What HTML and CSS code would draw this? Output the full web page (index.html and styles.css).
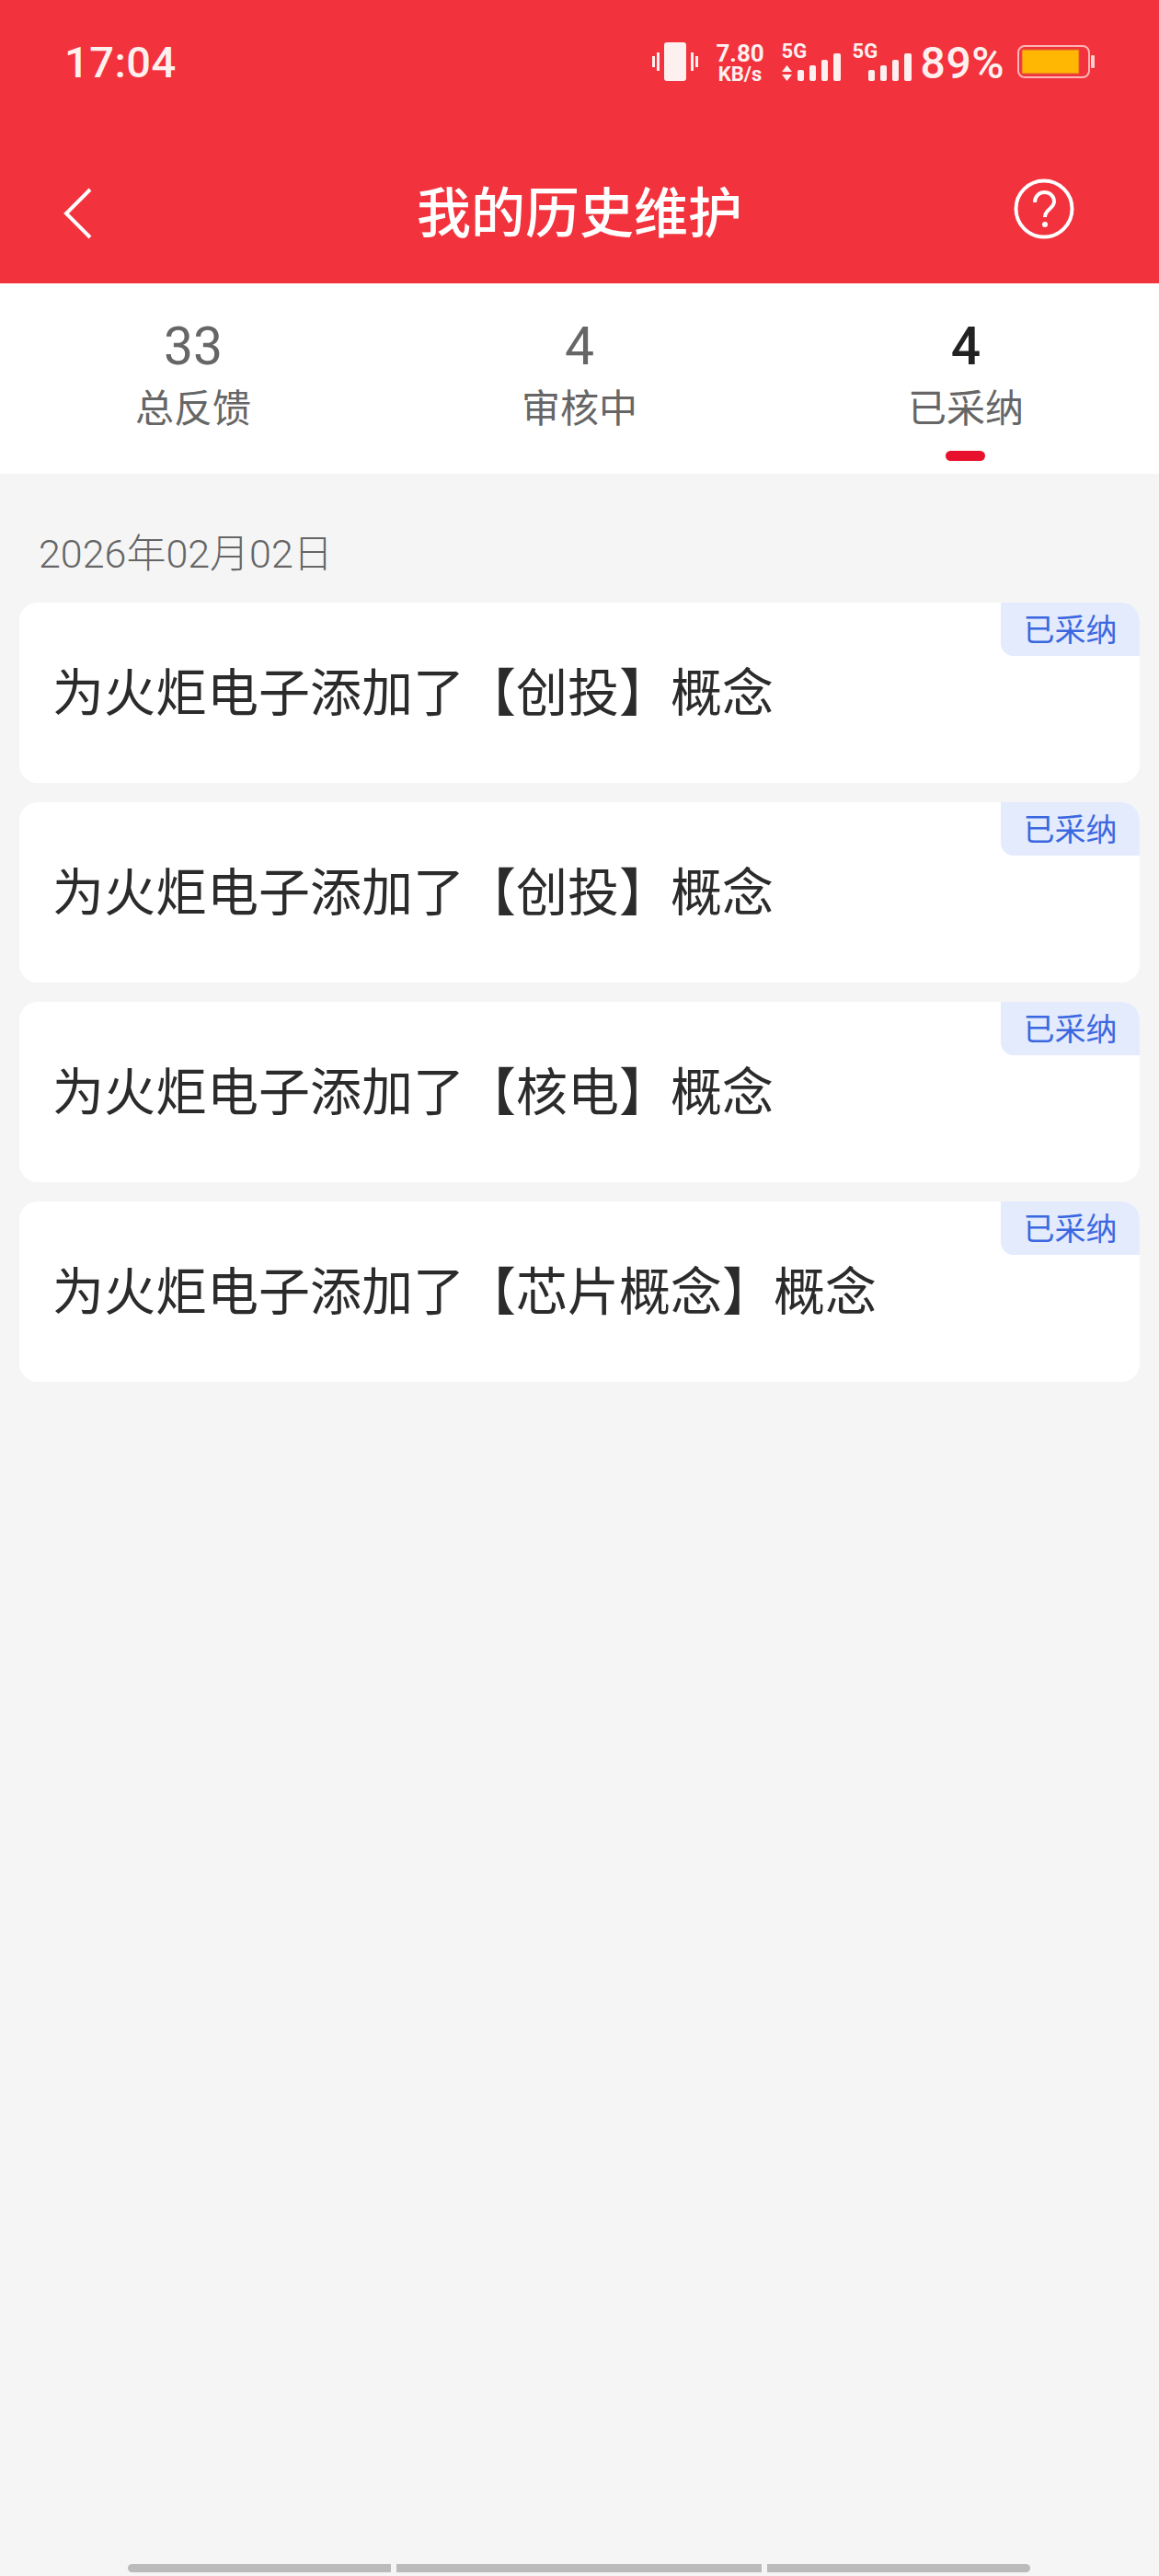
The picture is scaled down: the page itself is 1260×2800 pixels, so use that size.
FILE: index.html
```html
<!DOCTYPE html>
<html>
<head>
  <title>我的历史维护</title>
  <link rel="stylesheet" href="styles.css">
</head>
<body>
  <div class="page">
    <div class="header">
      <div class="statusbar">
        <span class="time">17:04</span>
        <div class="status-right">
          <svg class="vibrate" width="50" height="42" viewBox="0 0 50 42">
            <rect x="13" y="0" width="24" height="42" rx="3" fill="#fff0f0"/>
            <rect x="5" y="11" width="3" height="20" fill="#fff0f0"/>
            <rect x="0" y="15" width="3" height="12" fill="#fff0f0"/>
            <rect x="42" y="11" width="3" height="20" fill="#fff0f0"/>
            <rect x="47" y="15" width="3" height="12" fill="#fff0f0"/>
          </svg>
          <div class="speed"><span>7.80</span><span class="speed-unit">KB/s</span></div>
          <div class="signal signal-first">
            <span class="net">5G</span>
            <svg width="64" height="30" viewBox="0 0 64 30">
              <path d="M5.500 13 L11 20 H0 Z M5.500 30 L11 23 H0 Z" fill="#fff0f0"/>
              <rect x="17" y="18" width="7" height="12" rx="2" fill="#fff0f0"/>
              <rect x="30" y="13" width="7" height="17" rx="2" fill="#fff0f0"/>
              <rect x="43" y="7" width="7" height="23" rx="2" fill="#fff0f0"/>
              <rect x="56" y="0" width="8" height="30" rx="2" fill="#fff0f0"/>
            </svg>
          </div>
          <div class="signal">
            <span class="net">5G</span>
            <svg width="64" height="30" viewBox="0 0 64 30">
              <rect x="17" y="18" width="7" height="12" rx="2" fill="#fff0f0"/>
              <rect x="30" y="13" width="7" height="17" rx="2" fill="#fff0f0"/>
              <rect x="43" y="7" width="7" height="23" rx="2" fill="#fff0f0"/>
              <rect x="56" y="0" width="8" height="30" rx="2" fill="#fff0f0"/>
            </svg>
          </div>
          <span class="percent">89%</span>
          <svg class="battery" width="84" height="36" viewBox="0 0 84 36">
            <rect x="1" y="1" width="77" height="34" rx="7" fill="none" stroke="#ffb6b6" stroke-width="2"/>
            <rect x="5" y="5" width="62" height="26" fill="#ffb703" stroke="#e0602a" stroke-width="1"/>
            <rect x="80" y="11" width="4" height="14" rx="1" fill="#ffd0d0"/>
          </svg>
        </div>
      </div>
      <div class="navbar">
        <svg class="back" width="34" height="58" viewBox="0 0 34 58">
          <path d="M30 3 L4 29 L30 55" fill="none" stroke="#fff" stroke-width="4"/>
        </svg>
        <h1 class="title">我的历史维护</h1>
        <svg class="help" width="66" height="66" viewBox="0 0 66 66">
          <circle cx="33" cy="33" r="30.500" fill="none" stroke="#fff" stroke-width="4"/>
          <path d="M23 26 C23 19 28 15 33.500 15 C39 15 44 19 44 25 C44 33 34 33 34 42" fill="none" stroke="#fff" stroke-width="4"/>
          <circle cx="34" cy="50" r="3" fill="#fff"/>
        </svg>
      </div>
    </div>

    <div class="tabs">
      <div class="tab"><span class="num">33</span><span class="label">总反馈</span></div>
      <div class="tab"><span class="num">4</span><span class="label">审核中</span></div>
      <div class="tab active"><span class="num">4</span><span class="label">已采纳</span><i class="marker"></i></div>
    </div>

    <div class="date">2026年02月02日</div>

    <div class="list">
      <div class="card"><span class="badge">已采纳</span><p>为火炬电子添加了【创投】概念</p></div>
      <div class="card"><span class="badge">已采纳</span><p>为火炬电子添加了【创投】概念</p></div>
      <div class="card"><span class="badge">已采纳</span><p>为火炬电子添加了【核电】概念</p></div>
      <div class="card"><span class="badge">已采纳</span><p>为火炬电子添加了【芯片概念】概念</p></div>
    </div>

    <div class="gesture">
      <i class="seg seg-left"></i>
      <i class="seg seg-mid"></i>
      <i class="seg seg-right"></i>
    </div>
  </div>
</body>
</html>
```

FILE: styles.css
```css
* { box-sizing: border-box; }
body { margin: 0; background: #f5f5f5; font-family: "Noto Sans CJK SC", Roboto, sans-serif; }
.page { height: 2800px; display: flex; flex-direction: column; }

.header { height: 308px; background: #f2323c; color: #fff; }
.statusbar { height: 135px; padding: 40px 70px 0 70px; display: flex; justify-content: space-between; align-items: flex-start; color: #fff0f0; }
.time { font-family: Roboto, sans-serif; font-weight: 500; font-size: 47px; line-height: 56px; letter-spacing: 0.5px; }
.status-right { display: flex; align-items: flex-start; margin-top: 6px; }
.vibrate { margin-right: 20px; }
.speed { display: flex; flex-direction: column; align-items: center; font-family: Roboto, sans-serif; font-weight: 700; font-size: 26px; line-height: 24px; width: 52px; margin-right: 19px; }
.speed-unit { font-size: 22px; line-height: 22px; }
.signal { position: relative; width: 64px; height: 42px; display: flex; align-items: flex-end; }
.signal-first { margin-right: 13px; }
.net { position: absolute; left: 0; top: -1px; font-family: Roboto, sans-serif; font-weight: 700; font-size: 22px; line-height: 22px; }
.percent { font-family: Roboto, sans-serif; font-weight: 500; font-size: 48px; line-height: 46px; margin-left: 10px; margin-right: 14px; letter-spacing: 0.5px; }
.battery { margin-top: 3px; }

.navbar { height: 173px; padding: 0 92px 0 68px; display: flex; justify-content: space-between; align-items: flex-start; position: relative; }
.back { margin-top: 68px; }
.title { position: absolute; left: 0; right: 0; top: 53px; margin: 0; text-align: center; font-size: 59px; line-height: 80px; font-weight: 500; }
.help { margin-top: 59px; }

.tabs { height: 207px; background: #fff; display: flex; }
.tab { flex: 1; display: flex; flex-direction: column; align-items: center; padding-top: 34px; color: #666; position: relative; }
.num { font-family: Roboto, sans-serif; font-size: 57px; line-height: 70px; }
.label { font-size: 42px; line-height: 58px; margin-top: 0; }
.active .num { color: #222; font-weight: 500; }
.marker { position: absolute; left: 50%; top: 182px; width: 43px; height: 11px; margin-left: -22px; border-radius: 6px; background: #e8112d; }

.date { padding: 57px 0 0 42px; height: 140px; font-size: 43px; line-height: 60px; color: #666; font-family: Roboto, "Noto Sans CJK SC", sans-serif; font-weight: 300; }

.list { display: flex; flex-direction: column; gap: 21px; padding: 0 21px; }
.card { position: relative; height: 196px; background: #fff; border-radius: 20px; padding: 0 36px 8px; display: flex; align-items: center; }
.card p { margin: 0; font-size: 56px; line-height: 80px; color: #2b2b2b; font-weight: 400; }
.badge { position: absolute; top: 0; right: 0; width: 151px; height: 58px; line-height: 56px; text-align: center; font-size: 34px; color: #3b68e0; background: #e4ebfd; border-radius: 0 20px 0 14px; }

.gesture { margin-top: auto; margin-bottom: 4px; padding-left: 139px; display: flex; gap: 6px; }
.seg { height: 9px; background: #bbb; }
.seg-left { width: 286px; border-radius: 5px 0 0 5px; }
.seg-mid { width: 397px; }
.seg-right { width: 286px; border-radius: 0 5px 5px 0; }
```
